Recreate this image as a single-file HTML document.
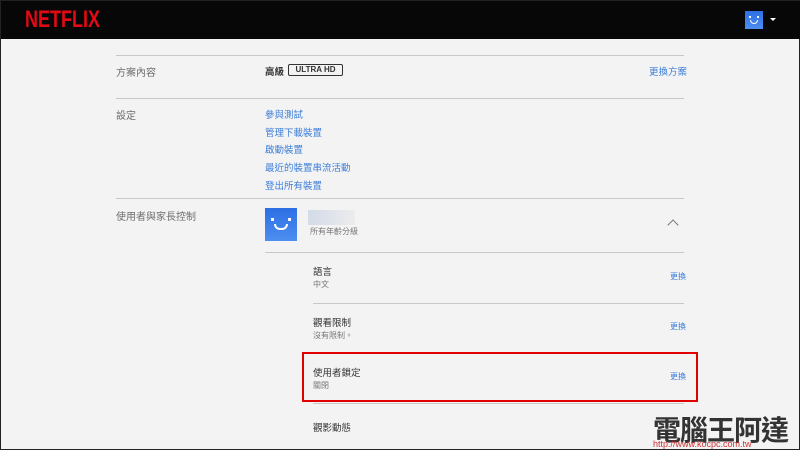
<!DOCTYPE html>
<html><head><meta charset="utf-8"><style>
*{margin:0;padding:0;box-sizing:border-box}
body{width:800px;height:450px;overflow:hidden;background:#f3f3f3;font-family:"Liberation Sans","Noto Sans CJK TC",sans-serif;position:relative;border:1px solid #222}
.a{position:absolute;white-space:nowrap}
.hdr{left:0;top:0;width:800px;height:38px;background:#070707}
.logo{left:24px;top:5px;color:#e50914;font-weight:bold;font-size:24px;transform:scaleX(0.75);transform-origin:left;}
.ln{height:1px;background:#c8c8c8}
.lbl{color:#6d6d6d;font-size:10px}
.lk{color:#3d7ed8;font-size:9.5px}
.t{color:#333;font-size:9.5px}
.s{color:#777;font-size:8px}
.av{background:linear-gradient(#2d6fe3,#4d8ef0);}
</style></head><body>
<div class="a hdr"></div>
<div class="a logo">NETFLIX</div>
<div class="a av" style="left:744px;top:10px;width:18px;height:18px"><div class="a" style="left:4px;top:5px;width:2px;height:2px;background:#fff"></div><div class="a" style="left:12px;top:5px;width:2px;height:2px;background:#fff"></div><div class="a" style="left:5px;top:9px;width:8px;height:4px;border:1.5px solid #fff;border-top:none;border-radius:0 0 5px 5px"></div></div>
<div class="a" style="left:769px;top:17px;border:3px solid transparent;border-top:3px solid #fff"></div>

<div class="a ln" style="left:115px;top:54px;width:568px"></div>
<div class="a lbl" style="left:115px;top:63px">方案內容</div>
<div class="a t" style="left:264px;top:63px;font-weight:bold">高級</div>
<div class="a" style="left:287px;top:63px;width:55px;height:12px;border:1px solid #333;border-radius:2px;font-size:8px;font-weight:bold;color:#333;text-align:center;line-height:10px">ULTRA HD</div>
<div class="a lk" style="left:648px;top:63px">更換方案</div>
<div class="a ln" style="left:115px;top:97px;width:568px"></div>
<div class="a lbl" style="left:115px;top:106px">設定</div>
<div class="a lk" style="left:264px;top:106px">參與測試</div>
<div class="a lk" style="left:264px;top:124px">管理下載裝置</div>
<div class="a lk" style="left:264px;top:141px">啟動裝置</div>
<div class="a lk" style="left:264px;top:159px">最近的裝置串流活動</div>
<div class="a lk" style="left:264px;top:177px">登出所有裝置</div>
<div class="a ln" style="left:115px;top:197px;width:568px"></div>
<div class="a lbl" style="left:115px;top:207px">使用者與家長控制</div>
<div class="a av" style="left:264px;top:207px;width:32px;height:33px"><div class="a" style="left:6px;top:10px;width:3px;height:3px;background:#fff"></div><div class="a" style="left:23px;top:10px;width:3px;height:3px;background:#fff"></div><div class="a" style="left:9px;top:16px;width:14px;height:6px;border:2px solid #fff;border-top:none;border-radius:0 0 8px 8px"></div></div>
<div class="a" style="left:307px;top:209px;width:47px;height:15px;background:linear-gradient(90deg,#d3dbe8,#ececec)"></div>
<div class="a s" style="left:309px;top:225px">所有年齡分級</div>
<div class="a" style="left:668px;top:220px;width:8px;height:8px;border-left:1.5px solid #777;border-top:1.5px solid #777;transform:rotate(45deg)"></div>
<div class="a ln" style="left:264px;top:251px;width:419px"></div>
<div class="a t" style="left:312px;top:263px">語言</div>
<div class="a s" style="left:312px;top:278px">中文</div>
<div class="a lk" style="left:669px;top:270px;font-size:8px">更換</div>
<div class="a ln" style="left:312px;top:302px;width:371px"></div>
<div class="a t" style="left:312px;top:314px">觀看限制</div>
<div class="a s" style="left:312px;top:329px">沒有限制。</div>
<div class="a lk" style="left:669px;top:320px;font-size:8px">更換</div>
<div class="a ln" style="left:312px;top:402px;width:371px"></div>
<div class="a t" style="left:312px;top:364px">使用者鎖定</div>
<div class="a s" style="left:312px;top:379px">關閉</div>
<div class="a lk" style="left:669px;top:370px;font-size:8px">更換</div>
<div class="a" style="left:301px;top:351px;width:396px;height:50px;border:2.5px solid #e00000"></div>
<div class="a t" style="left:312px;top:419px">觀影動態</div>
<div class="a" style="left:652px;top:408px;font-size:28px;font-weight:bold;color:#333;letter-spacing:-1px">電腦王阿達</div>
<div class="a" style="left:652px;top:438px;font-size:9px;color:#c33">http://www.kocpc.com.tw</div>
</body></html>
